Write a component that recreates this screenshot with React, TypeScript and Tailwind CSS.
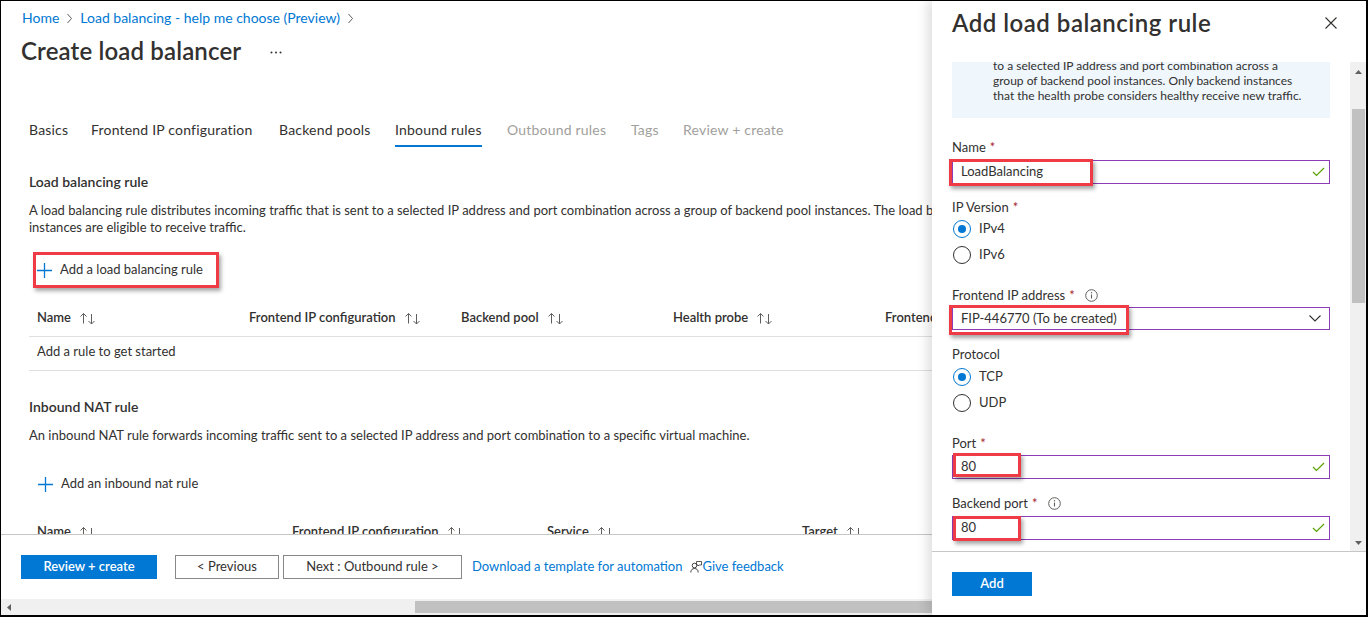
import React from "react";

const Chev = () => (
  <svg width="7" height="11" viewBox="0 0 7 11" className="mx-[7px]">
    <path d="M1.5 1l4 4.5-4 4.5" fill="none" stroke="#605e5c" strokeWidth="1" />
  </svg>
);

const Sort = () => (
  <svg width="17" height="13" viewBox="0 0 17 13" className="ml-[8px]">
    <path d="M4.5 11.5V1.5M1.5 4.5l3-3 3 3" fill="none" stroke="#605e5c" strokeWidth="1" />
    <path d="M12.5 2v10M9.5 9l3 3 3-3" fill="none" stroke="#605e5c" strokeWidth="1" />
  </svg>
);

const Plus = () => (
  <svg width="15" height="15" viewBox="0 0 15 15">
    <path d="M7.5 0v15M0 7.5h15" stroke="#0078d4" strokeWidth="1.3" />
  </svg>
);

const Check = () => (
  <svg width="13" height="10" viewBox="0 0 13 10">
    <path d="M1 5l3.5 3.5L12 1" fill="none" stroke="#57a300" strokeWidth="1.2" />
  </svg>
);

const Info = () => (
  <svg width="13" height="13" viewBox="0 0 13 13">
    <circle cx="6.5" cy="6.5" r="5.8" fill="none" stroke="#605e5c" strokeWidth="1" />
    <path d="M6.5 5.5v4" stroke="#605e5c" strokeWidth="1.1" />
    <circle cx="6.5" cy="3.7" r="0.7" fill="#605e5c" />
  </svg>
);

const Tab = ({ w, children, active, disabled }: { w: string; children: React.ReactNode; active?: boolean; disabled?: boolean }) => (
  <div className={w + " shrink-0"}>
    <span
      className={
        "inline-block pb-[5px] border-b-2 whitespace-nowrap tracking-[0.2px] " +
        (active ? "border-[#0078d4] text-[#323130]" : "border-transparent ") +
        (disabled ? "text-[#a19f9d]" : "")
      }
    >
      {children}
    </span>
  </div>
);

const Th = ({ w, children }: { w: string; children: React.ReactNode }) => (
  <div className={w + " shrink-0 pl-[8px] flex items-center whitespace-nowrap"}>
    <span>{children}</span>
    <Sort />
  </div>
);

const Label = ({ children, req, info, mt }: { children: React.ReactNode; req?: boolean; info?: boolean; mt: string }) => (
  <div className={mt + " flex items-center text-[13px] leading-[17px] h-[17px] whitespace-nowrap"}>
    <span>{children}</span>
    {req && <span className="text-[#a4262c] ml-[4px]">*</span>}
    {info && (
      <span className="ml-[10px] flex items-center">
        <Info />
      </span>
    )}
  </div>
);

const Radio = ({ label, checked, mt }: { label: string; checked?: boolean; mt: string }) => (
  <div className={mt + " h-[20px] flex items-center"}>
    <div
      className={
        "ml-[1px] w-[18px] h-[18px] rounded-full border flex items-center justify-center " +
        (checked ? "border-[#0078d4]" : "border-[#323130]")
      }
    >
      {checked && <div className="w-[8px] h-[8px] rounded-full bg-[#0078d4]" />}
    </div>
    <span className="ml-[8px] text-[13px]">{label}</span>
  </div>
);

const RedBox = ({ cls }: { cls: string }) => (
  <div className={"absolute border-[3px] border-[#ef3b45] shadow-[2px_3px_4px_rgba(0,0,0,0.35)] " + cls} />
);

const Field = ({ value, mt, h, box }: { value: string; mt: string; h: string; box: string }) => (
  <div className={mt + " relative"}>
    <div className={h + " border border-[#8c3cb4] flex items-center justify-between pl-[8px] pr-[4px] text-[13px]"}>
      <span>{value}</span>
      <Check />
    </div>
    <RedBox cls={box} />
  </div>
);

function Main() {
  return (
    <div className="w-[931px] shrink-0 flex flex-col overflow-hidden">
      <div className="h-[533px] overflow-hidden">
        <div className="pl-[21px] pt-[9px]">
          <div className="flex items-center text-[14px] leading-[16px] text-[#0078d4] whitespace-nowrap">
            <span>Home</span>
            <Chev />
            <span>Load balancing - help me choose (Preview)</span>
            <Chev />
          </div>
        </div>
        <div className="pl-[20px] mt-[9px] flex items-center h-[32px]">
          <h1 className="text-[24px] leading-[32px] font-semibold whitespace-nowrap tracking-[0.15px]">Create load balancer</h1>
          <svg width="12" height="3" viewBox="0 0 12 3" className="ml-[29px] mt-[2px]">
            <circle cx="1.5" cy="1.5" r="1" fill="#323130" />
            <circle cx="6" cy="1.5" r="1" fill="#323130" />
            <circle cx="10.5" cy="1.5" r="1" fill="#323130" />
          </svg>
        </div>

        <div className="pl-[28px] mt-[53px] flex text-[14px] leading-[20px]">
          <Tab w="w-[62px]">Basics</Tab>
          <Tab w="w-[188px]">Frontend IP configuration</Tab>
          <Tab w="w-[116px]">Backend pools</Tab>
          <Tab w="w-[112px]" active>
            Inbound rules
          </Tab>
          <Tab w="w-[124px]" disabled>
            Outbound rules
          </Tab>
          <Tab w="w-[52px]" disabled>
            Tags
          </Tab>
          <Tab w="w-[120px]" disabled>
            Review + create
          </Tab>
        </div>

        <div className="pl-[28px]">
          <div className="mt-[25px] text-[14px] leading-[20px] font-semibold">Load balancing rule</div>
          <div className="mt-[10px] text-[13px] leading-[17px] whitespace-nowrap">
            A load balancing rule distributes incoming traffic that is sent to a selected IP address and port combination across a group of backend pool instances. The load balancer only sends traffic to healthy
            <br />
            instances are eligible to receive traffic.
          </div>
          <div className="mt-[16px] ml-[4px] w-[186px] h-[36px] border-[3px] border-[#ef3b45] shadow-[2px_3px_4px_rgba(0,0,0,0.35)] flex items-center pl-[1px]">
            <Plus />
            <span className="ml-[8px] text-[13px] whitespace-nowrap">Add a load balancing rule</span>
          </div>

          <div className="mt-[12px] h-[37px] border-b border-[#e1dfdd] flex text-[13px] font-semibold">
            <Th w="w-[212px]">Name</Th>
            <Th w="w-[212px]">Frontend IP configuration</Th>
            <Th w="w-[212px]">Backend pool</Th>
            <Th w="w-[212px]">Health probe</Th>
            <Th w="w-[212px]">Frontend port</Th>
          </div>
          <div className="h-[34px] border-b border-[#e1dfdd] pt-[6px] pl-[8px] text-[13px] leading-[17px]">Add a rule to get started</div>

          <div className="mt-[26px] text-[14px] leading-[20px] font-semibold">Inbound NAT rule</div>
          <div className="mt-[10px] text-[13px] leading-[17px] whitespace-nowrap">
            An inbound NAT rule forwards incoming traffic sent to a selected IP address and port combination to a specific virtual machine.
          </div>
          <div className="mt-[28px] h-[24px] flex items-center pl-[9px]">
            <Plus />
            <span className="ml-[8px] text-[13px] whitespace-nowrap">Add an inbound nat rule</span>
          </div>
          <div className="mt-[18px] h-[36px] flex text-[13px] font-semibold">
            <Th w="w-[255px]">Name</Th>
            <Th w="w-[255px]">Frontend IP configuration</Th>
            <Th w="w-[255px]">Service</Th>
            <Th w="w-[255px]">Target</Th>
          </div>
        </div>
      </div>

      <div className="h-[65px] border-t border-[#c8c6c4] pt-[20px] pl-[20px] flex items-start text-[13px] whitespace-nowrap">
        <div className="w-[136px] h-[24px] bg-[#0078d4] text-white font-semibold flex items-center justify-center">Review + create</div>
        <div className="ml-[18px] w-[104px] h-[24px] border border-[#8a8886] flex items-center justify-center">&lt; Previous</div>
        <div className="ml-[4px] w-[179px] h-[24px] border border-[#8a8886] flex items-center justify-center">Next : Outbound rule &gt;</div>
        <div className="ml-[10px] h-[24px] flex items-center text-[#0078d4]">
          <span>Download a template for automation</span>
          <svg width="12" height="12" viewBox="0 0 12 12" className="ml-[8px]">
            <circle cx="4.5" cy="4.5" r="2.3" fill="none" stroke="#323130" strokeWidth="0.9" />
            <path d="M0.8 11.5c0-2.6 1.6-4 3.7-4s3.7 1.4 3.7 4" fill="none" stroke="#323130" strokeWidth="0.9" />
            <path d="M6.5 0.5h5v3.5h-2.5l-1 1v-1h-1.5z" fill="none" stroke="#323130" strokeWidth="0.8" />
          </svg>
          <span>Give feedback</span>
        </div>
      </div>

      <div className="h-[16px] bg-[#f0f0f0] flex items-center">
        <svg width="5" height="7" viewBox="0 0 5 7" className="ml-[6px]">
          <path d="M4 0v7L0 3.5z" fill="#606060" />
        </svg>
        <div className="ml-[403px] h-[12px] flex-1 bg-[#c1c1c1]" />
      </div>
    </div>
  );
}

function Panel() {
  return (
    <div className="w-[434px] shrink-0 h-full flex flex-col relative z-10 bg-white shadow-[-5px_0_10px_rgba(0,0,0,0.12)]">
      <div className="h-[61px] shrink-0 pl-[20px] pr-[29px] pt-[6px]">
        <div className="h-[32px] flex items-center justify-between">
          <h2 className="text-[24px] leading-[32px] font-semibold whitespace-nowrap tracking-[0.5px]">Add load balancing rule</h2>
          <svg width="12" height="12" viewBox="0 0 12 12">
            <path d="M0.5 0.5l11 11M11.5 0.5l-11 11" stroke="#323130" strokeWidth="1.1" />
          </svg>
        </div>
      </div>

      <div className="h-[489px] shrink-0 flex">
        <div className="flex-1 overflow-hidden px-[20px]">
          <div className="-mt-[29px] bg-[#eff6fc] pt-[10px] pb-[15px] pl-[41px] text-[12px] leading-[15px] whitespace-nowrap overflow-hidden">
            <div>A load balancing rule distributes incoming traffic that is sent</div>
            <div>to a selected IP address and port combination across a</div>
            <div>group of backend pool instances. Only backend instances</div>
            <div>that the health probe considers healthy receive new traffic.</div>
          </div>

          <Label mt="mt-[21px]" req>
            Name
          </Label>
          <Field value="LoadBalancing" mt="mt-[4px]" h="h-[24px]" box="-left-[3px] -top-[1px] w-[144px] h-[27px]" />

          <Label mt="mt-[15px]" req>
            IP Version
          </Label>
          <Radio label="IPv4" checked mt="mt-[3px]" />
          <Radio label="IPv6" mt="mt-[6px]" />

          <Label mt="mt-[22px]" req info>
            Frontend IP address
          </Label>
          <div className="mt-[3px] relative">
            <div className="h-[23px] border border-[#8c3cb4] flex items-center justify-between pl-[8px] pr-[8px] text-[13px]">
              <span>FIP-446770 (To be created)</span>
              <svg width="12" height="7" viewBox="0 0 12 7">
                <path d="M0.5 0.5l5.5 5.5 5.5-5.5" fill="none" stroke="#323130" strokeWidth="1.1" />
              </svg>
            </div>
            <RedBox cls="-left-[3px] -top-[2px] w-[180px] h-[30px]" />
          </div>

          <Label mt="mt-[16px]">Protocol</Label>
          <Radio label="TCP" checked mt="mt-[4px]" />
          <Radio label="UDP" mt="mt-[6px]" />

          <Label mt="mt-[22px]" req>
            Port
          </Label>
          <Field value="80" mt="mt-[3px]" h="h-[24px]" box="left-[1px] -top-[2px] w-[68px] h-[24px]" />

          <Label mt="mt-[16px]" req info>
            Backend port
          </Label>
          <Field value="80" mt="mt-[4px]" h="h-[24px]" box="left-[1px] top-0 w-[68px] h-[25px]" />
        </div>

        <div className="w-[16px] shrink-0 bg-[#f0f0f0] flex flex-col items-center">
          <svg width="7" height="4" viewBox="0 0 7 4" className="mt-[8px]">
            <path d="M0 4h7L3.5 0z" fill="#606060" />
          </svg>
          <div className="mt-[35px] w-[13px] ml-[1px] h-[194px] bg-[#c1c1c1]" />
          <div className="flex-1" />
          <svg width="7" height="4" viewBox="0 0 7 4" className="mb-[6px]">
            <path d="M0 0h7L3.5 4z" fill="#606060" />
          </svg>
        </div>
      </div>

      <div className="flex-1 border-t border-[#c8c6c4] pt-[20px] pl-[20px]">
        <div className="w-[80px] h-[24px] bg-[#0078d4] text-white text-[13px] font-semibold flex items-center justify-center">Add</div>
      </div>
    </div>
  );
}

export default function App() {
  return (
    <div className="w-[1368px] h-[617px] border-t border-l border-r-2 border-b-2 border-black bg-white flex overflow-hidden font-['Lato',sans-serif] text-[#323130]">
      <Main />
      <Panel />
    </div>
  );
}
